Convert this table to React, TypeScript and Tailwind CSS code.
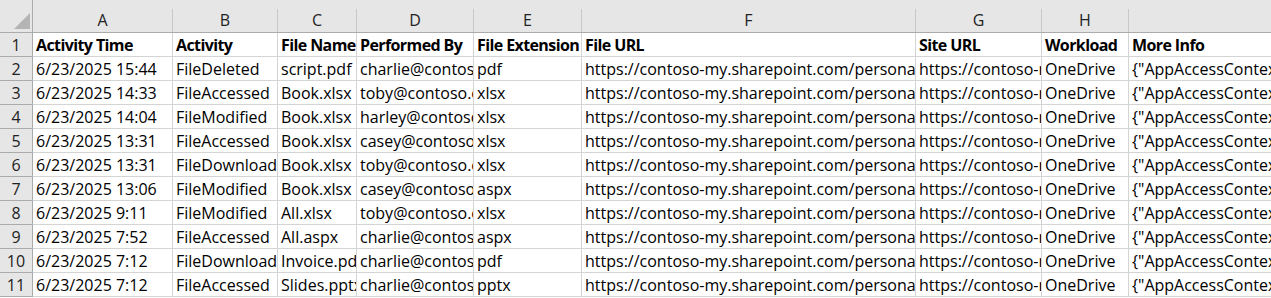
import React from "react";

const cols = [140, 105, 79, 117, 108, 334, 126, 87, 200];
const letters = ["A", "B", "C", "D", "E", "F", "G", "H", ""];
const header = ["Activity Time", "Activity", "File Name", "Performed By", "File Extension", "File URL", "Site URL", "Workload", "More Info"];
const url = "https://contoso-my.sharepoint.com/personal/";
const site = "https://contoso-my.sharepoint.com/";
const more = '{"AppAccessContext":{}}';
const rows: string[][] = [
  ["6/23/2025 15:44", "FileDeleted", "script.pdf", "charlie@contoso.com", "pdf"],
  ["6/23/2025 14:33", "FileAccessed", "Book.xlsx", "toby@contoso.com", "xlsx"],
  ["6/23/2025 14:04", "FileModified", "Book.xlsx", "harley@contoso.com", "xlsx"],
  ["6/23/2025 13:31", "FileAccessed", "Book.xlsx", "casey@contoso.com", "xlsx"],
  ["6/23/2025 13:31", "FileDownloaded", "Book.xlsx", "toby@contoso.com", "xlsx"],
  ["6/23/2025 13:06", "FileModified", "Book.xlsx", "casey@contoso.com", "aspx"],
  ["6/23/2025 9:11", "FileModified", "All.xlsx", "toby@contoso.com", "xlsx"],
  ["6/23/2025 7:52", "FileAccessed", "All.aspx", "charlie@contoso.com", "aspx"],
  ["6/23/2025 7:12", "FileDownloaded", "Invoice.pdf", "charlie@contoso.com", "pdf"],
  ["6/23/2025 7:12", "FileAccessed", "Slides.pptx", "charlie@contoso.com", "pptx"],
].map((r) => [...r, url, site, "OneDrive", more]);

export default function App() {
  return (
    <div
      className="w-[1271px] h-[298px] overflow-hidden bg-white text-[16px] text-black"
      style={{ fontFamily: "'Open Sans', sans-serif" }}
    >
      <div className="flex h-[33px] bg-[#e6e6e6] border-b border-[#ababab]">
        <div className="w-[33px] shrink-0 relative border-r border-[#ababab]">
          <svg className="absolute left-[14px] top-[13px]" width="16" height="16" viewBox="0 0 16 16">
            <polygon points="16,0 16,16 0,16" fill="#b4b4b4" />
          </svg>
        </div>
        {cols.map((w, i) => (
          <div key={i} className="shrink-0 flex flex-col" style={{ width: w }}>
            <div className="h-[9px]" />
            <div className="flex-1 flex items-center justify-center border-r border-[#c8c8c8] text-[#222] text-[16px] leading-none pb-[2px]">
              {letters[i]}
            </div>
          </div>
        ))}
      </div>
      {[header, ...rows].map((r, ri) => (
        <div key={ri} className="flex h-[24px]">
          <div className="w-[33px] shrink-0 bg-[#e6e6e6] border-r border-b border-[#ababab] flex items-center justify-center text-[#222] text-[16px] leading-none">
            {ri + 1}
          </div>
          {r.map((c, ci) => (
            <div
              key={ci}
              className={`shrink-0 overflow-hidden whitespace-nowrap border-r border-b border-[#d4d4d4] pl-[3px] flex items-center leading-none ${ri === 0 ? "font-bold tracking-[-0.6px]" : ""}`}
              style={{ width: cols[ci] }}
            >
              {c}
            </div>
          ))}
        </div>
      ))}
    </div>
  );
}
